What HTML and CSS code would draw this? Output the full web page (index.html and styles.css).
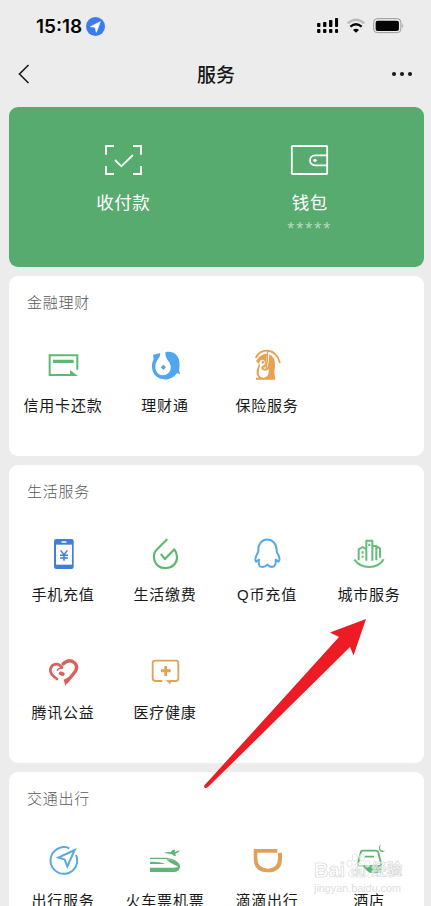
FILE: index.html
```html
<!DOCTYPE html>
<html lang="zh-CN">
<head>
<meta charset="utf-8">
<title>服务</title>
<link rel="stylesheet" href="styles.css">
</head>
<body>
<div class="screen">
  <header class="status">
    <div class="clock"><span>15:18</span>
      <svg class="loc" viewBox="0 0 57 57"><circle cx="28.500" cy="28.500" r="28.500" fill="#3b7cec"/><path d="M13 29 43 14 31 46 27 31Z" fill="#fff" stroke="#fff" stroke-width="2" stroke-linejoin="round"/></svg>
    </div>
    <svg class="signals" viewBox="300 48 270 58">
      <g fill="#050505"><rect x="306" y="69" width="10" height="12" rx="2"/><rect x="324" y="66" width="10" height="15" rx="2"/><rect x="342" y="60" width="10" height="21" rx="2"/><rect x="360" y="54" width="9" height="27" rx="2"/><rect x="306" y="87" width="10" height="12" rx="3"/><rect x="324" y="87" width="10" height="12" rx="3"/><rect x="342" y="87" width="10" height="12" rx="3"/><rect x="360" y="87" width="9" height="12" rx="3"/>
      <path d="M414 90Q423 82 432 90L423 98Z"/><rect x="482" y="62" width="70" height="31" rx="6"/></g>
      <path d="M398 70Q423 49 448 70" fill="none" stroke="#bcbcbc" stroke-width="7"/>
      <path d="M406 80Q423 66 440 80" fill="none" stroke="#050505" stroke-width="7"/>
      <rect x="476" y="56" width="82" height="42" rx="11" fill="none" stroke="#999" stroke-width="3"/><path d="M562 70Q567 77 562 84Z" fill="#999"/>
    </svg>
  </header>
  <nav class="nav">
    <svg class="back" viewBox="0 0 12 20"><path d="M10.500 1 1.500 10 10.500 19" fill="none" stroke="#1c1c1c" stroke-width="1.600"/></svg>
    <h1>服务</h1>
    <div class="more"><i></i><i></i><i></i></div>
  </nav>
  <main class="cards">
    <section class="pay">
      <div class="pay-item">
        <svg viewBox="72 42 117 96"><path d="M78 74V48H102M159 48H183V74M183 108V132H159M102 132H78V108M105 90 124 109 159 75" fill="none" stroke="#fff" stroke-width="5.500"/></svg>
        <b>收付款</b>
      </div>
      <div class="pay-item">
        <svg viewBox="630 42 117 96"><g fill="none" stroke="#fff" stroke-width="5.500"><rect x="635.500" y="48" width="106" height="84" rx="2"/><path d="M741 76H705a15 15 0 0 0 0 30H741"/></g><circle cx="705" cy="91" r="5" fill="#fff"/></svg>
        <b>钱包</b>
        <small>*****</small>
      </div>
    </section>

    <section class="card finance">
      <h2>金融理财</h2>
      <div class="grid">
        <div class="item">
          <svg viewBox="135 231 108 108"><path d="M232 299V256H149V315H214" fill="none" stroke="#5fb870" stroke-width="6"/><path d="M159 269H221V279H159ZM210 300 234 318H210Z" fill="#5fb870"/></svg>
          <span>信用卡还款</span>
        </div>
        <div class="item">
          <svg viewBox="6 21 108 108"><path d="M24 45 46 39C46 50 41 54 36 62C23 84 36 106 54 106C73 106 84 86 73 67C67 58 61 53 61 37C82 31 101 44 103 65Q105 79 102 89L105 103 96 99C84 117 63 123 43 115C20 104 16 77 26 57Z" fill="#4fa6ee"/><path d="M55 74 63 82 55 90 47 82Z" fill="#4fa6ee"/></svg>
          <span>理财通</span>
        </div>
        <div class="item">
          <svg viewBox="312 21 108 108"><path d="M332 54C343 25 392 20 405 69" fill="none" stroke="#e8a052" stroke-width="5.500"/><path d="M333 63Q345 42 366 41L363 75Q361 86 353 82L362 89Q371 84 373 43Q391 51 390 78L388 97 391 119H333V113H341Q330 100 338 82L342 72Z" fill="#e8a052"/><path d="M345 63Q354 54 361 66Q361 75 352 77Q347 81 350 88Q361 97 371 87Q374 109 358 113Q342 114 341 99Q341 87 345 78Q340 70 345 63Z" fill="#fff"/><path d="M368 31Q369 62 362 91" fill="none" stroke="#e8a052" stroke-width="4"/><circle cx="354" cy="67" r="4" fill="#e8a052"/></svg>
          <span>保险服务</span>
        </div>
      </div>
    </section>

    <section class="card life">
      <h2>生活服务</h2>
      <div class="grid">
        <div class="item">
          <svg viewBox="135 198 108 108"><rect x="162" y="207" width="59" height="90" rx="7" fill="#407fd4"/><path d="M168 224H216V284H168Z" fill="#fff"/><path d="M186 216H198" stroke="#fff" stroke-width="4" stroke-linecap="round"/><path d="M182 241 192 254 202 241M180 256H204M180 264H204M192 254V272" fill="none" stroke="#407fd4" stroke-width="4.500"/></svg>
          <span>手机充值</span>
        </div>
        <div class="item">
          <svg viewBox="441 198 108 108"><path d="M500 209 470 239C456 253 461 278 475 288C490 299 514 295 524 282C535 269 532 250 523 238L495 267 484 254" fill="none" stroke="#5cb96c" stroke-width="6.500" stroke-linejoin="round" stroke-linecap="round"/></svg>
          <span>生活缴费</span>
        </div>
        <div class="item">
          <svg viewBox="99 48 108 108"><path d="M127 95C122 46 185 47 182 95C189 106 194 119 187 125L179 119Q181 131 174 139Q162 144 154 134Q144 145 132 139Q126 133 129 119L120 125Q114 117 127 95Z" fill="none" stroke="#58a9e3" stroke-width="6" stroke-linejoin="round"/></svg>
          <span>Q币充值</span>
        </div>
        <div class="item">
          <svg viewBox="405 48 108 108"><g fill="none" stroke="#62bd76" stroke-width="6" stroke-linejoin="round"><path d="M428 121V88L440 81 451 88V122M451 88V62H469V122M469 78H479L492 85V113M481 79V121"/><path d="M415 119Q431 141 459 141Q490 141 503 118"/><path d="M440 94V101M440 107V113M460 71V78"/></g></svg>
          <span>城市服务</span>
        </div>
        <div class="item">
          <svg viewBox="135 42 108 108"><g fill="none" stroke="#d8625d" stroke-linecap="round" stroke-linejoin="round"><path d="M171 117Q149 102 151 88Q156 69 175 73L186 82" stroke-width="8"/><path d="M189 72Q209 54 225 70Q237 83 219 103L200 126" stroke-width="10" /><path d="M186 84Q174 85 172 91" stroke-width="4"/></g><path d="M191 119 212 108 196 138Z" fill="#d8625d"/><ellipse cx="185" cy="101" rx="9" ry="6" transform="rotate(20 185 101)" fill="#d8625d"/></svg>
          <span>腾讯公益</span>
        </div>
        <div class="item">
          <svg viewBox="441 42 108 108"><path d="M487 123H466Q458 123 458 115V69Q458 62 466 62H528Q535 62 535 69V115Q535 123 528 123H510" fill="none" stroke="#e0a356" stroke-width="5.500"/><path d="M493 78H501V88H512V97H501V108H493V97H483V88H493ZM496 121H513L511 133Z" fill="#e0a356"/></svg>
          <span>医疗健康</span>
        </div>
      </div>
    </section>

    <section class="card travel">
      <h2>交通出行</h2>
      <div class="grid">
        <div class="item">
          <svg viewBox="135 189 108 108"><g fill="none" stroke="#5aa9df" stroke-width="6"><path d="M208 205A40 40 0 1 0 228 225"/><path d="M224 210 175 233 194 239 202 259Z" stroke-width="6"/></g></svg>
          <span>出行服务</span>
        </div>
        <div class="item">
          <svg viewBox="441 189 108 108"><g fill="#60b676"><path d="M492 219Q503 214 512 217L518 209 526 210 524 216 539 211Q539 217 526 221L528 228 521 227 516 223ZM450 245Q478 244 496 252L450 252ZM499 237Q531 241 538 257Q539 262 529 257Q506 248 499 237ZM450 263H521Q533 263 540 257Q541 275 523 276H450Z"/></g><path d="M450 235H500Q528 239 537 254Q541 265 521 268" fill="none" stroke="#60b676" stroke-width="3.500"/></svg>
          <span>火车票机票</span>
        </div>
        <div class="item">
          <svg viewBox="99 189 108 108"><path d="M113 207H184V218H198V236Q198 276 156 277Q113 276 113 236ZM124 218V235Q124 265 156 266Q186 264 186 235V218Z" fill="#e1a05a" fill-rule="evenodd"/></svg>
          <span>滴滴出行</span>
        </div>
        <div class="item">
          <svg viewBox="405 189 108 108"><path d="M427 247 434 218Q435 212 441 212H479Q486 212 487 218L495 250V258H426ZM445 230H474M424 266V282M494 266V278" fill="none" stroke="#58b66b" stroke-width="5.500"/><path d="M495 193Q485 214 507 212Q500 219 492 213Q484 202 495 193ZM438 261H498L487 278H461Z" fill="#58b66b"/></svg>
          <span>酒店</span>
        </div>
      </div>
    </section>
  </main>

  <svg class="arrow" viewBox="0 0 200 200"><path d="M14.300 185.500 149 37 140 32.500 176 19 163.500 55.500 160 47 18 187Q15.500 189 14 187Z" fill="#ed1c24"/></svg>
  <div class="mark">
    <div class="mark-name"><span>Bai</span><svg viewBox="0 0 28 28"><g fill="#fff" fill-opacity=".6" stroke="#dcdcdc" stroke-width=".8"><ellipse cx="4" cy="12" rx="3" ry="4"/><ellipse cx="10" cy="5" rx="3" ry="4"/><ellipse cx="18" cy="5" rx="3" ry="4"/><ellipse cx="24" cy="12" rx="3" ry="4"/><path d="M14 11Q18 11 20 16L25 22Q25 28 18 27H9Q2 27 3 22L9 15Q11 11 14 11Z"/></g></svg><i>du</i><span class="cn">经验</span></div>
    <div class="mark-url">jingyan.baidu.com</div>
  </div>
</div>
</body>
</html>
```
FILE: styles.css
```css
* { box-sizing: border-box; }
body { margin: 0; background: #ececec; font-family: "Liberation Sans", "Noto Sans CJK SC", sans-serif; }
.screen { position: relative; width: 431px; height: 906px; overflow: hidden; background: #ececec; }
svg { display: block; flex: none; }
h1, h2 { margin: 0; }
.status { height: 52px; padding: 0 26px 0 36px; display: flex; justify-content: space-between; align-items: center; }
.clock { display: flex; align-items: center; gap: 3px; font: 600 19px/22px Inter, sans-serif; color: #080808; }
.clock span { width: 47px; padding-top: 1px; white-space: nowrap; }
.loc { width: 19px; height: 19px; }
.signals { width: 90px; height: 19.300px; }
.nav { height: 44px; padding: 0 19px 0 18px; display: grid; grid-template-columns: 40px 1fr 40px; align-items: center; }
.back { width: 12px; height: 20px; }
.nav h1 { padding: 3px 0 0 2px; text-align: center; font-size: 19px; line-height: 26px; font-weight: 500; color: #171717; }
.more { display: flex; gap: 4px; justify-content: flex-end; }
.more i { width: 4px; height: 4px; border-radius: 50%; background: #151515; }
.cards { width: 424px; padding: 11px 0 0 9px; display: flex; flex-direction: column; gap: 9px; }
.pay { height: 160px; border-radius: 9px; background: #58ab6e; display: flex; justify-content: center; padding: 37px 21px 0; }
.pay-item { flex: 1; display: flex; flex-direction: column; align-items: center; color: #fff; }
.pay-item svg { width: 39px; height: 32px; }
.pay-item b { margin-top: 14px; font-size: 17.500px; line-height: 26px; font-weight: 400; letter-spacing: .5px; }
.pay-item small { margin-top: 3px; font-size: 18px; line-height: 20px; letter-spacing: 2px; color: #b4dabe; }
.card { border-radius: 9px; background: #fff; padding: 17px 4px 0 3px; }
.finance { height: 180px; }
.life { height: 298px; }
.travel { height: 180px; }
.card h2 { padding-left: 15px; font-size: 15px; line-height: 20px; font-weight: 300; letter-spacing: .75px; color: #585858; }
.grid { margin-top: 34px; display: grid; grid-template-columns: repeat(4, 102px); row-gap: 49px; }
.item { display: flex; flex-direction: column; align-items: center; gap: 13px; }
.item svg { width: 36px; height: 36px; }
.item span { font-size: 15px; line-height: 20px; letter-spacing: .8px; white-space: nowrap; color: #191919; }
.travel .item { gap: 12px; }
.arrow { position: absolute; left: 190px; top: 600px; width: 200px; height: 200px; }
.mark { position: absolute; left: 314px; top: 853px; width: 90px; }
.mark-name { display: flex; align-items: flex-end; height: 29px; font: bold 20px/24px "Liberation Sans", "Noto Sans CJK SC", sans-serif; color: rgba(255,255,255,.7); -webkit-text-stroke: .6px #d2d2d2; }
.mark-name svg { width: 25px; height: 27px; margin: 0 0 3px 1px; }
.mark-name i { width: 0; margin-left: -20px; margin-right: 20px; font-size: 12px; font-style: normal; line-height: 20px; }
.mark-name .cn { font-size: 15.500px; white-space: nowrap; }
.mark-url { font-size: 10.800px; line-height: 13px; color: #dedede; }
```
